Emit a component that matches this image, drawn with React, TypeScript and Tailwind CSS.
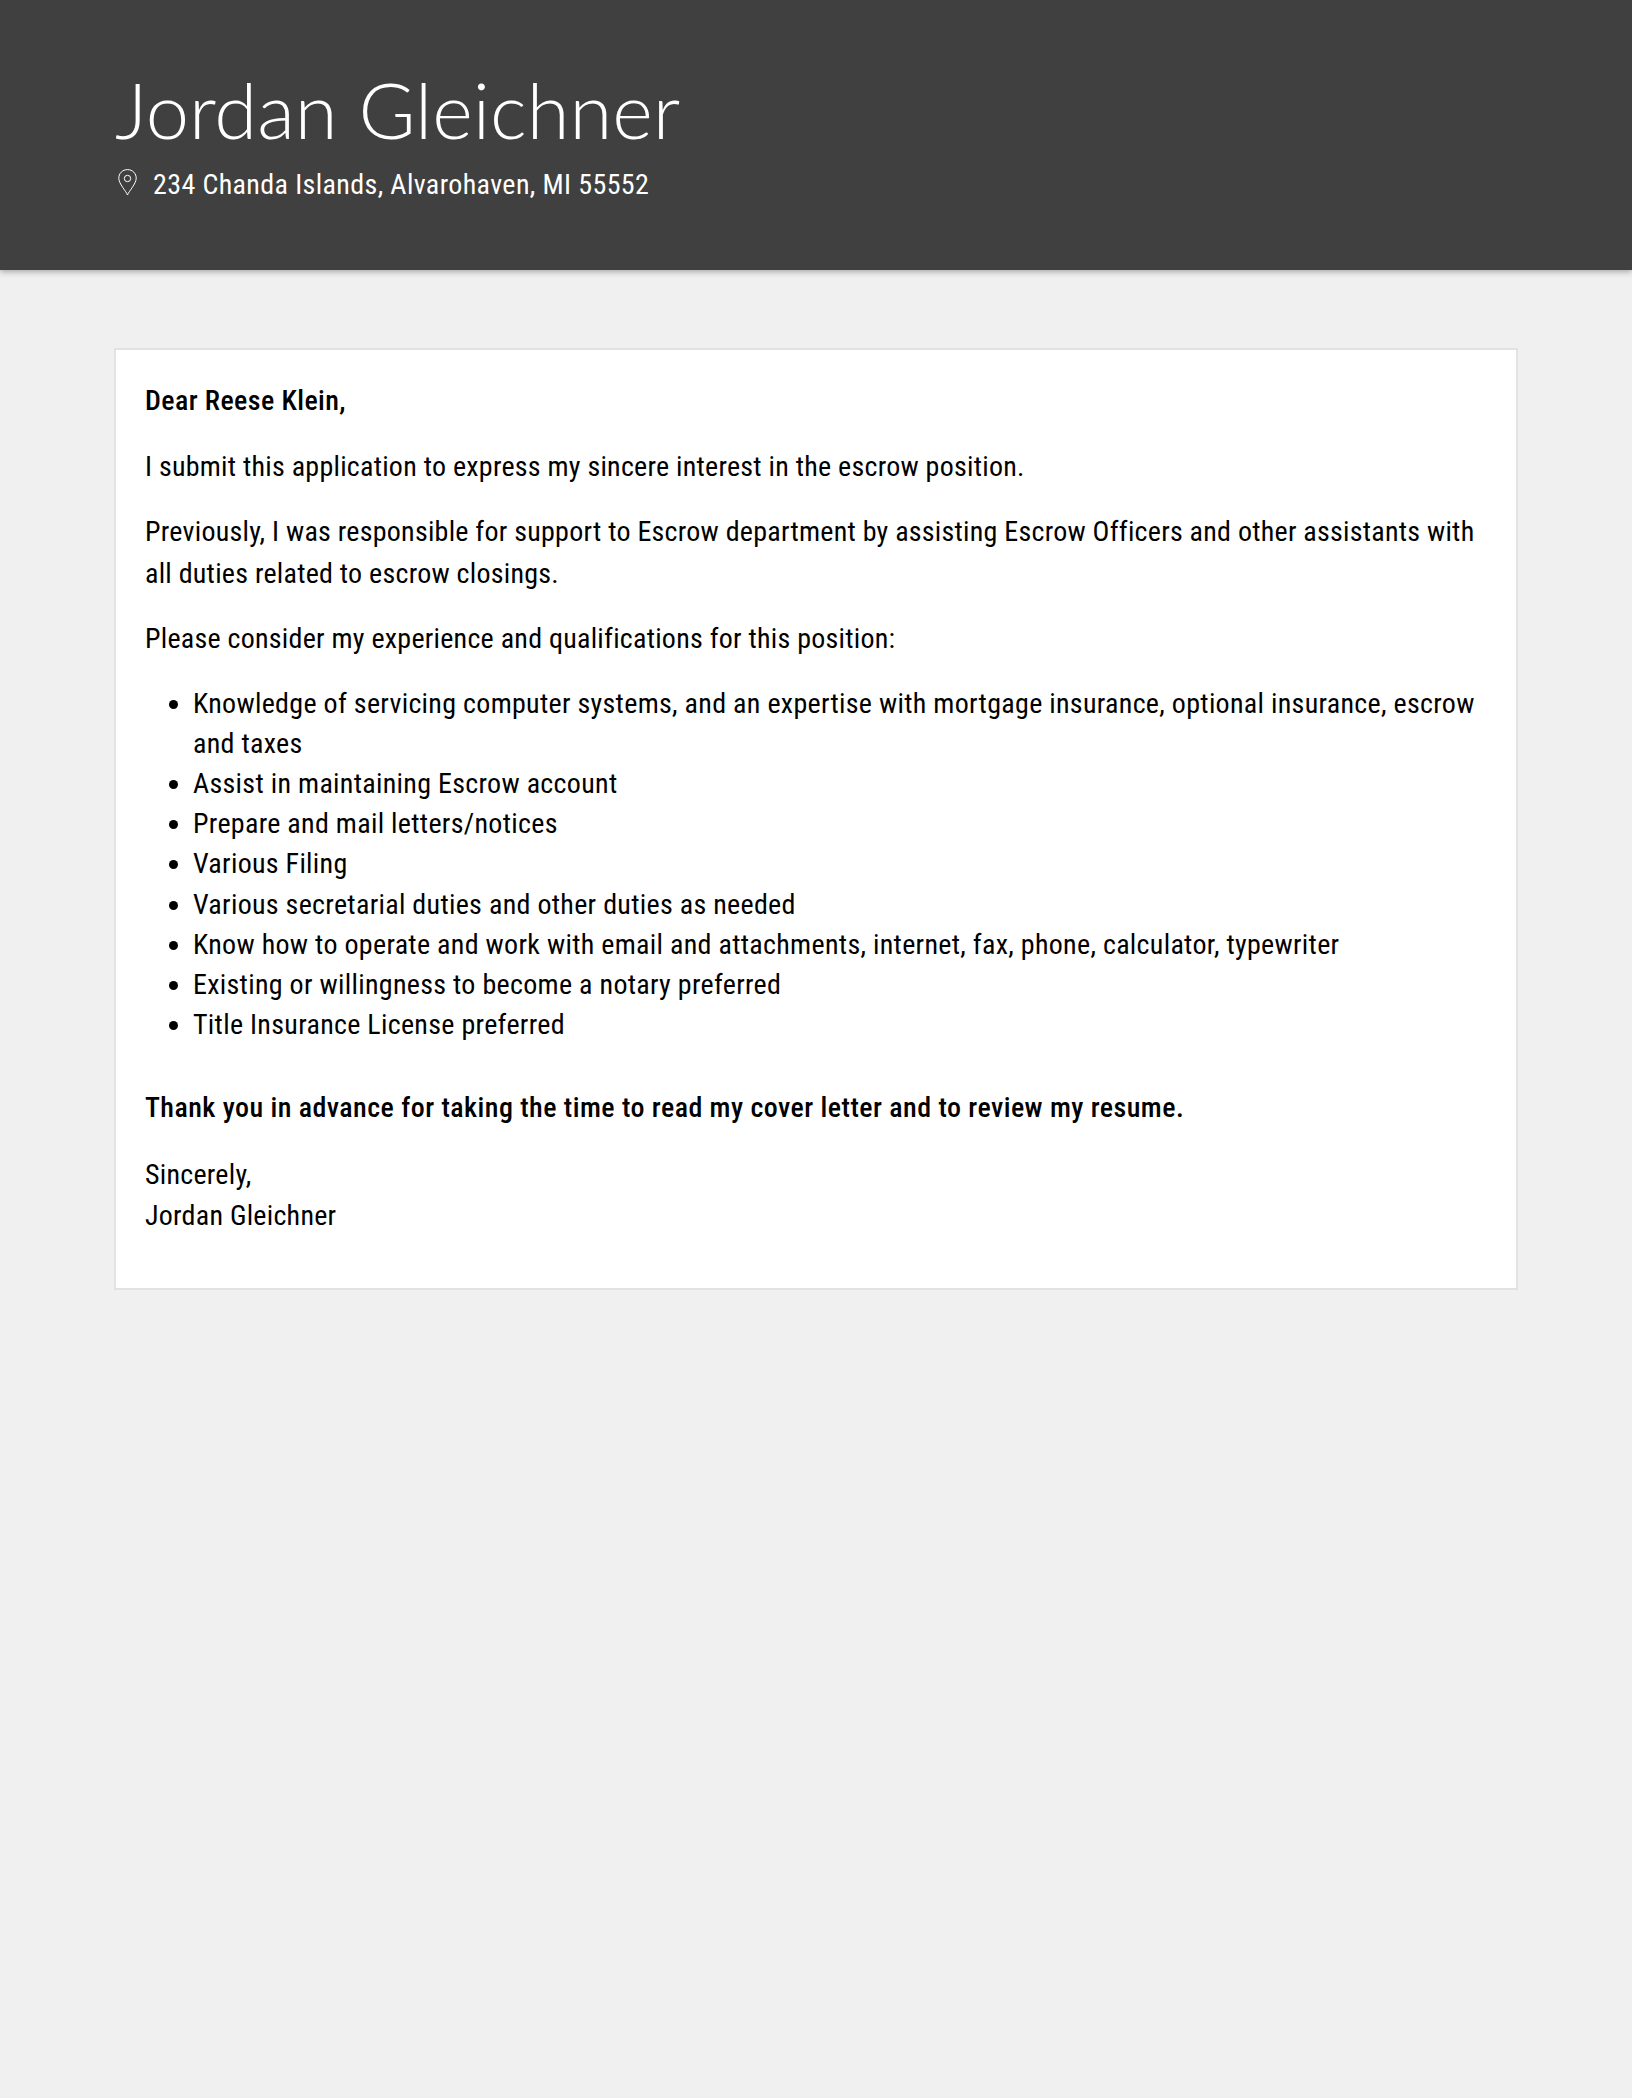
const duties = [
  "Knowledge of servicing computer systems, and an expertise with mortgage insurance, optional insurance, escrow and taxes",
  "Assist in maintaining Escrow account",
  "Prepare and mail letters/notices",
  "Various Filing",
  "Various secretarial duties and other duties as needed",
  "Know how to operate and work with email and attachments, internet, fax, phone, calculator, typewriter",
  "Existing or willingness to become a notary preferred",
  "Title Insurance License preferred",
];

const PinIcon = () => (
  <svg viewBox="0 0 19 27" fill="none" stroke="currentColor" strokeWidth="1" className="w-[19px] h-[27px] shrink-0 mb-[4px]">
    <path d="M9.5 26 C8 22 1 15 0.8 9.5 C0.6 4.5 4.5 0.6 9.5 0.6 C14.5 0.6 18.4 4.5 18.2 9.5 C18 15 11 22 9.5 26 Z" />
    <circle cx="9.5" cy="9.5" r="3.2" />
  </svg>
);

export default function App() {
  return (
    <div className="min-h-[2098px] bg-[#f0f0f0] text-black font-['Roboto',sans-serif] font-stretch-condensed tracking-[0.25px] text-[28px] leading-[41.5px]">
      {/* Header */}
      <header className="h-[270px] bg-[#404040] text-white pl-[115px] pt-[66px] shadow-[0_2px_6px_rgba(0,0,0,0.3)]">
        <h1 className="font-['Lato',sans-serif] font-light font-stretch-normal tracking-normal text-[77.7px] leading-[86px]">Jordan Gleichner</h1>
        <div className="flex items-center gap-[16px] mt-[12px] pl-[3px]">
          <PinIcon />
          <span className="tracking-[0.38px]">234 Chanda Islands, Alvarohaven, MI 55552</span>
        </div>
      </header>

      {/* Letter */}
      <main className="px-[114px] pt-[78px]">
        <div className="bg-white border-2 border-[#e2e2e2] px-[29px] pt-[30px] pb-[27px]">
          <p className="mb-6 font-medium tracking-[0.4px]">Dear Reese Klein,</p>
          <p className="mb-6">I submit this application to express my sincere interest in the escrow position.</p>
          <p className="mb-6">
            Previously, I was responsible for support to Escrow department by assisting Escrow Officers and other assistants with all duties related to escrow closings.
          </p>
          <p className="mb-6">Please consider my experience and qualifications for this position:</p>
          <ul className="list-disc pl-12 mb-[42px] leading-[40.2px] tracking-[0.3px]">
            {duties.map((d) => (
              <li key={d}>{d}</li>
            ))}
          </ul>
          <p className="mb-[25px] font-medium tracking-[0.45px]">Thank you in advance for taking the time to read my cover letter and to review my resume.</p>
          <p className="mb-6">
            Sincerely,
            <br />
            Jordan Gleichner
          </p>
        </div>
      </main>
    </div>
  );
}
